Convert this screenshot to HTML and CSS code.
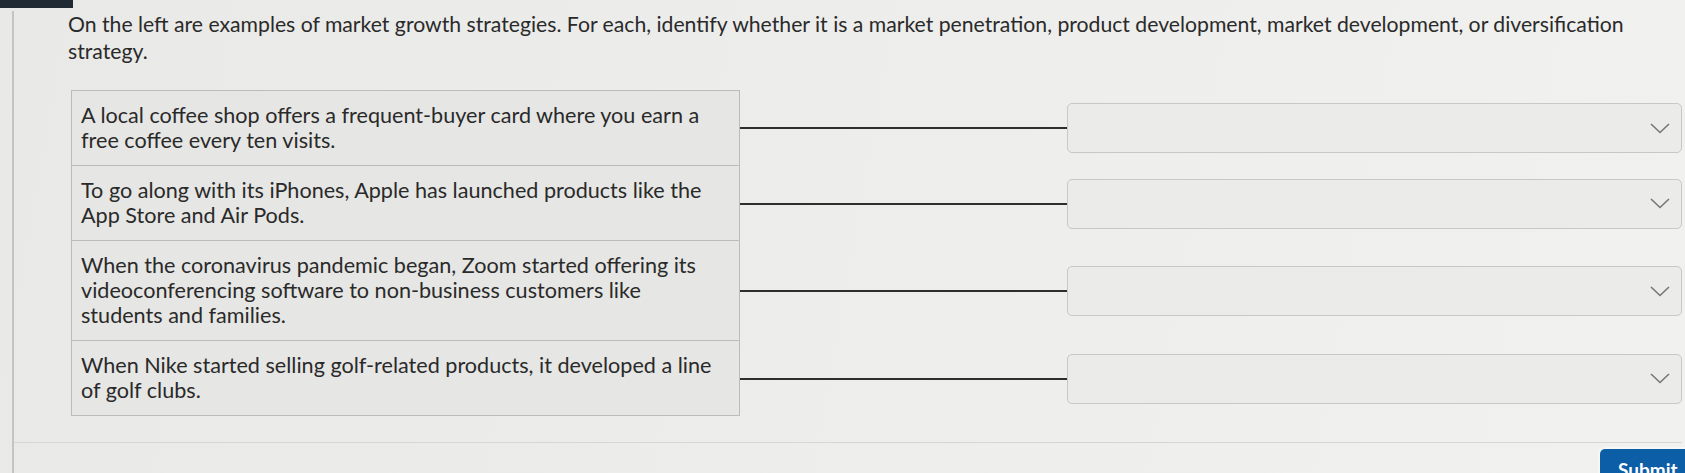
FILE: index.html
```html
<!DOCTYPE html>
<html lang="en">
<head>
<meta charset="utf-8">
<title>Market growth strategies</title>
<link rel="stylesheet" href="styles.css">
</head>
<body>
<div class="topbar"></div>
<div class="panel">
  <p class="title">On the left are examples of market growth strategies. For each, identify whether it is a market penetration, product development, market development, or diversification strategy.</p>
  <div class="match">
    <div class="cell first">A local coffee shop offers a frequent-buyer card where you earn a<br>free coffee every ten visits.</div>
    <div class="connector"></div>
    <div class="select"><svg class="chev" width="20" height="11" viewBox="0 0 20 11"><polyline points="1,1 10,9.5 19,1" fill="none" stroke="#777" stroke-width="1.6"/></svg></div>

    <div class="cell">To go along with its iPhones, Apple has launched products like the<br>App Store and Air Pods.</div>
    <div class="connector"></div>
    <div class="select"><svg class="chev" width="20" height="11" viewBox="0 0 20 11"><polyline points="1,1 10,9.5 19,1" fill="none" stroke="#777" stroke-width="1.6"/></svg></div>

    <div class="cell">When the coronavirus pandemic began, Zoom started offering its<br>videoconferencing software to non-business customers like<br>students and families.</div>
    <div class="connector"></div>
    <div class="select"><svg class="chev" width="20" height="11" viewBox="0 0 20 11"><polyline points="1,1 10,9.5 19,1" fill="none" stroke="#777" stroke-width="1.6"/></svg></div>

    <div class="cell">When Nike started selling golf-related products, it developed a line<br>of golf clubs.</div>
    <div class="connector"></div>
    <div class="select"><svg class="chev" width="20" height="11" viewBox="0 0 20 11"><polyline points="1,1 10,9.5 19,1" fill="none" stroke="#777" stroke-width="1.6"/></svg></div>
  </div>
  <div class="footer">
    <button class="submit" type="button">Submit</button>
  </div>
</div>
</body>
</html>
```

FILE: styles.css
```css
html, body {
  margin: 0;
  padding: 0;
}
body {
  width: 1685px;
  height: 473px;
  overflow: hidden;
  background: linear-gradient(100deg, #e9e9e7 0%, #ededeb 50%, #f1f1ef 100%);
  font-family: Lato, "Open Sans", sans-serif;
  color: #2a2a2a;
}
.topbar {
  width: 73px;
  height: 8px;
  background: #1f2a33;
}
.panel {
  margin: 2px 3px 0 12px;
  border-left: 2px solid #c4c4c2;
  padding-left: 54px;
  padding-top: 0;
  height: 470px;
  box-sizing: border-box;
}
.title {
  margin: 3px 0 0 0;
  font-size: 21.2px;
  line-height: 27px;
}
.match {
  margin: 25px 0 0 3px;
  display: grid;
  grid-template-columns: 669px 327px 1fr;
  align-items: center;
}
.cell {
  align-self: stretch;
  background: #e6e6e4;
  border: 1px solid #bcbcba;
  border-top: none;
  padding: 12px 9px 12px 9px;
  font-size: 21.6px;
  line-height: 25px;
}
.cell.first {
  border-top: 1px solid #bcbcba;
}
.connector {
  height: 2px;
  background: #2e2e2e;
}
.select {
  height: 50px;
  box-sizing: border-box;
  border: 1px solid #c8c8c6;
  border-radius: 5px;
  background: #ebebe9;
  display: flex;
  align-items: center;
  justify-content: flex-end;
  padding-right: 11px;
}
.footer {
  margin-left: -54px;
  margin-top: 26px;
  border-top: 1px solid #d6d6d4;
  padding-top: 6px;
  display: flex;
  justify-content: flex-end;
}
.submit {
  margin-right: -36px;
  background: #0c5ea7;
  color: #ffffff;
  border: none;
  border-radius: 5px;
  box-shadow: 0 0 0 2px #f7f7f5;
  font-family: Lato, "Open Sans", sans-serif;
  font-weight: 700;
  font-size: 19px;
  height: 40px;
  padding: 0 18px 0 18px;
  width: 118px;
  text-align: left;
}
```
